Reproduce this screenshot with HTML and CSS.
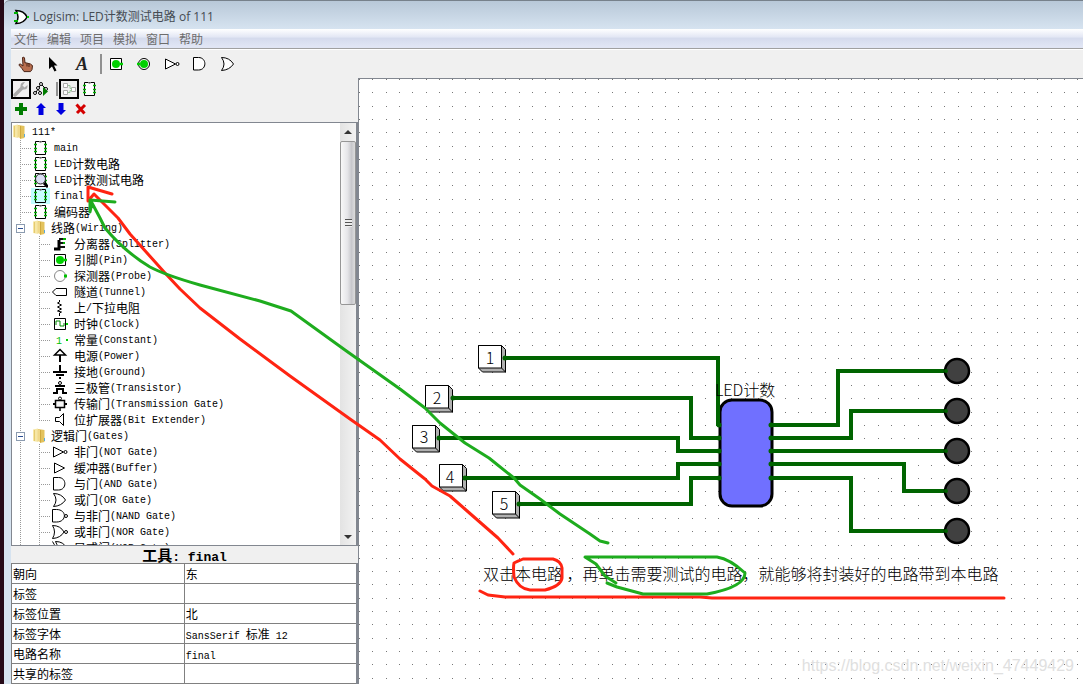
FILE: index.html
```
<!DOCTYPE html>
<html lang="zh-CN">
<head>
<meta charset="utf-8">
<title>Logisim: LED计数测试电路 of 111</title>
<link rel="stylesheet" href="styles.css">
</head>
<body>
<svg class="defs" aria-hidden="true">
  <symbol id="folder" viewBox="0 0 16 16"><path d="M6 1l6.500 1v12L8 15z" fill="#e3c25c"/><path d="M1 1.500L6 .5v13.500l-5-1z" fill="#f6e7a6"/><path d="M5.500 1.500L9 2v12.500L5.500 13z" fill="#efd88a"/><path d="M8.500 2v12.500" stroke="#cfa93f"/><path d="M2.500 2v11" stroke="#e6ca70"/><path d="M12.500 10v3" stroke="#5aa9dc"/></symbol>
  <symbol id="chip" viewBox="0 0 16 16"><path d="M3.500 1.500h10v13h-10z" fill="var(--chip, #fff)" stroke="#000"/><path d="M7 1.500q1.500 2 3 0" fill="#aaa" stroke="#888"/><path d="M2 4.500h3M2 8.500h3M2 11.500h3M12 4.500h3M12 8.500h3M12 11.500h3" stroke="#00b000" stroke-width="1.500"/></symbol>
  <symbol id="chipview" viewBox="0 0 16 16"><use href="#chip"/><circle cx="8.500" cy="7" r="5" fill="#d8dcf4" fill-opacity=".9" stroke="#222"/><path d="M12 11l4 4" stroke="#000" stroke-width="3"/></symbol>
  <symbol id="splitter" viewBox="0 0 16 16"><path d="M2 13h5V4" fill="none" stroke="#000" stroke-width="3"/><path d="M7 3h7M8 7h5M8 11h5" stroke="#111" stroke-width="2"/><path d="M11 3h3M11 7h2" stroke="#00b000" stroke-width="2"/></symbol>
  <symbol id="pin" viewBox="0 0 16 16"><path d="M2.500 2.500h11v11h-11z" fill="#fff" stroke="#000"/><circle cx="8" cy="8" r="4" fill="#00d000"/><path d="M12 8h3" stroke="#00d000" stroke-width="2.500"/></symbol>
  <symbol id="opin" viewBox="0 0 16 16"><circle cx="8" cy="8" r="5.500" fill="#fff" stroke="#000"/><circle cx="8" cy="8" r="4" fill="#00d000"/><path d="M1 8h3" stroke="#00d000" stroke-width="2.500"/></symbol>
  <symbol id="probe" viewBox="0 0 16 16"><circle cx="8" cy="8" r="5.500" fill="#fff" stroke="#888"/><path d="M12 8h3" stroke="#00c000" stroke-width="3"/></symbol>
  <symbol id="tunnel" viewBox="0 0 16 16"><path d="M.5 8L4 4.500h10.500v7H4z" fill="#fff" stroke="#000"/></symbol>
  <symbol id="resistor" viewBox="0 0 16 16"><path d="M7.500 0v2l-2 1 4 2-4 2 4 2-4 2 4 1-2 1v3" fill="none" stroke="#000"/></symbol>
  <symbol id="clock" viewBox="0 0 16 16"><path d="M2.500 2.500h11v11h-11z" fill="#fff" stroke="#000"/><path d="M4 9V5h4v5h4V7" fill="none" stroke="#008c00"/><path d="M14 8h2" stroke="#00d000" stroke-width="2"/></symbol>
  <symbol id="power" viewBox="0 0 16 16"><path d="M8 14V7" stroke="#000" stroke-width="2"/><path d="M2.500 7L8 1.500 13.500 7z" fill="#fff" stroke="#000" stroke-width="1.500"/></symbol>
  <symbol id="ground" viewBox="0 0 16 16"><path d="M8 1v6M1 8h14M4 11h8M7 14h2" stroke="#000" stroke-width="2"/></symbol>
  <symbol id="transistor" viewBox="0 0 16 16"><path d="M1 13h4V9h6v4h4M3 6h10" fill="none" stroke="#000" stroke-width="2"/><circle cx="8" cy="3" r="1.500" fill="#fff" stroke="#000"/></symbol>
  <symbol id="transmission" viewBox="0 0 16 16"><path d="M1 8h14" stroke="#000" stroke-width="2"/><path d="M3.500 4.500h9v7h-9zM8 11v4" fill="#f5f5f5" stroke="#000" stroke-width="1.500"/><circle cx="8" cy="2.500" r="1.500" fill="#fff" stroke="#000"/></symbol>
  <symbol id="extender" viewBox="0 0 16 16"><path d="M3.500 5.500h4l4-4v12l-4-4h-4z" fill="#fff" stroke="#000"/></symbol>
  <symbol id="not" viewBox="0 0 16 16"><path d="M1.500 3v10l10-5z" fill="#fff" stroke="#000"/><circle cx="13.500" cy="8" r="1.500" fill="#fff" stroke="#000"/></symbol>
  <symbol id="buffer" viewBox="0 0 16 16"><path d="M2.500 3v10l10-5z" fill="#fff" stroke="#000"/></symbol>
  <symbol id="and" viewBox="0 0 16 16"><path d="M1.500 1.500h5c8.500 0 8.500 12.500 0 12.500h-5z" fill="#fff" stroke="#000"/></symbol>
  <symbol id="or" viewBox="0 0 16 16"><path d="M1.500 1.500q8 0 12 6.500-4 6-12 6.500 5-6.500 0-13z" fill="#fff" stroke="#000"/></symbol>
  <symbol id="nand" viewBox="0 0 16 16"><path d="M.5 1.500h4c10.500 0 10.500 12.500 0 12.500h-4z" fill="#fff" stroke="#000"/><circle cx="14" cy="8" r="1.500" fill="#fff" stroke="#000"/></symbol>
  <symbol id="nor" viewBox="0 0 16 16"><path d="M.5 1.500q8 0 11.500 6.500-3.500 6-11.500 6.500 4-6.500 0-13z" fill="#fff" stroke="#000"/><circle cx="14" cy="8" r="1.500" fill="#fff" stroke="#000"/></symbol>
  <symbol id="xor" viewBox="0 0 16 16"><path d="M3.500 1.500q8 0 11 6.500-3 6-11 6.500 4-6.500 0-13zM.5 1.500q5 6.500 0 13" fill="none" stroke="#000"/></symbol>
</svg>

<div class="window">
  <header class="titlebar">
    <svg class="icon" viewBox="0 0 16 16"><path d="M3 1.500q8 0 11 6.500-3 6.500-11 6.500 4-6.500 0-13z" fill="#fff" stroke="#000" stroke-width="1.500"/><path d="M1 4h4M1 12h4" stroke="#00b000" stroke-width="2"/><path d="M14 8h2" stroke="#00d000" stroke-width="2"/></svg>
    <h1>Logisim: LED计数测试电路 of 111</h1>
  </header>
  <nav class="menubar">
    <button>文件</button><button>编辑</button><button>项目</button><button>模拟</button><button>窗口</button><button>帮助</button>
  </nav>
  <div class="toolbar">
    <button aria-label="Poke"><svg class="icon" viewBox="0 0 16 16"><path d="M4.500 1.500q1.500-1 2 .5l.5 5q1-.8 2 .3 1-.6 2 .5 1.500-.6 2 .8l1.500 1-.5 4-1.500 2H6l-2-3-3-3.500q0-1.500 1.500-1L5 10z" fill="#b86f50" stroke="#4b2417"/><path d="M9 7.500v3M11 8v3" stroke="#4b2417"/></svg></button>
    <button aria-label="Select"><svg class="icon" viewBox="0 0 16 16"><path d="M3 1v12l3-2.500 2.500 5 2-1-2.500-5h3.500z" fill="#000"/></svg></button>
    <button aria-label="Text" class="letter">A</button>
    <span class="separator"></span>
    <button aria-label="Input"><svg class="icon"><use href="#pin"/></svg></button>
    <button aria-label="Output"><svg class="icon"><use href="#opin"/></svg></button>
    <button aria-label="NOT"><svg class="icon"><use href="#not"/></svg></button>
    <button aria-label="AND"><svg class="icon"><use href="#and"/></svg></button>
    <button aria-label="OR"><svg class="icon"><use href="#or"/></svg></button>
  </div>
  <main class="workspace">
    <aside class="sidebar">
      <div class="views">
        <button class="on" aria-label="Toolbox"><svg class="icon" viewBox="0 0 16 16"><path d="M2 14l7-7" stroke="#aaa" stroke-width="3.500" stroke-linecap="round"/><path d="M14.500 4l-3 2.500-2-2L12 1Q7 1 7.500 6l2.500 2.500Q15 9 14.500 4z" fill="#aaa"/></svg></button>
        <button aria-label="Simulation tree"><svg class="icon" viewBox="0 0 16 16"><path d="M8 3L2 13M8 3l6 6M5 8l3 5" fill="none" stroke="#000"/><g fill="#fff" stroke="#000"><circle cx="8" cy="3" r="1.500"/><circle cx="5" cy="7" r="1.500"/><circle cx="2" cy="12" r="1.500"/><circle cx="7" cy="12" r="1.500"/><circle cx="13" cy="8" r="1.500"/></g><path d="M10 6l5 4.500-5 4.500z" fill="#007c00"/></svg></button>
        <span class="separator"></span>
        <button class="on" aria-label="Layout"><svg class="icon" viewBox="0 0 16 16"><path d="M2.500 2.500h4v4h-4zM2.500 9.500h4v4h-4zM10.500 6.500h4v4h-4z" fill="#fff" stroke="#aaa"/><path d="M7 4.500h2v3h2M7 11.500h2v-2h2" fill="none" stroke="#9cc79c"/></svg></button>
        <button aria-label="Appearance"><svg class="icon"><use href="#chip"/></svg></button>
      </div>
      <div class="edits">
        <button aria-label="Add"><svg class="icon" viewBox="0 0 16 16"><path d="M8 2v12M2 8h12" stroke="#007c00" stroke-width="4"/></svg></button>
        <button aria-label="Move up"><svg class="icon" viewBox="0 0 16 16"><path d="M8 2l5 5h-2.500v7h-5V7H3z" fill="#0000e0"/></svg></button>
        <button aria-label="Move down"><svg class="icon" viewBox="0 0 16 16"><path d="M8 14l5-5h-2.500V2h-5v7H3z" fill="#0000e0"/></svg></button>
        <button aria-label="Remove"><svg class="icon" viewBox="0 0 16 16"><path d="M3.500 3.500l8 9M12 4l-8 8" stroke="#d40000" stroke-width="3"/></svg></button>
      </div>
      <div class="explorer">
        <ul class="tree">
          <li class="root"><svg class="icon"><use href="#folder"/></svg><i>111*</i></li>
          <li><b></b><svg class="icon"><use href="#chip"/></svg><i>main</i></li>
          <li><b></b><svg class="icon"><use href="#chip"/></svg><i>LED</i>计数电路</li>
          <li><b></b><svg class="icon"><use href="#chipview"/></svg><i>LED</i>计数测试电路</li>
          <li class="selected"><b></b><svg class="icon"><use href="#chip"/></svg><i>final</i></li>
          <li><b></b><svg class="icon"><use href="#chip"/></svg>编码器</li>
          <li class="group"><b></b><svg class="icon"><use href="#folder"/></svg>线路<i>(Wiring)</i></li>
          <li class="leaf"><b></b><svg class="icon"><use href="#splitter"/></svg>分离器<i>(Splitter)</i></li>
          <li class="leaf"><b></b><svg class="icon"><use href="#pin"/></svg>引脚<i>(Pin)</i></li>
          <li class="leaf"><b></b><svg class="icon"><use href="#probe"/></svg>探测器<i>(Probe)</i></li>
          <li class="leaf"><b></b><svg class="icon"><use href="#tunnel"/></svg>隧道<i>(Tunnel)</i></li>
          <li class="leaf"><b></b><svg class="icon"><use href="#resistor"/></svg>上<i>/</i>下拉电阻</li>
          <li class="leaf"><b></b><svg class="icon"><use href="#clock"/></svg>时钟<i>(Clock)</i></li>
          <li class="leaf"><b></b><svg class="icon" viewBox="0 0 16 16"><text x="4" y="12" class="one">1</text><path d="M14 8h2" stroke="#00d000" stroke-width="2"/></svg>常量<i>(Constant)</i></li>
          <li class="leaf"><b></b><svg class="icon"><use href="#power"/></svg>电源<i>(Power)</i></li>
          <li class="leaf"><b></b><svg class="icon"><use href="#ground"/></svg>接地<i>(Ground)</i></li>
          <li class="leaf"><b></b><svg class="icon"><use href="#transistor"/></svg>三极管<i>(Transistor)</i></li>
          <li class="leaf"><b></b><svg class="icon"><use href="#transmission"/></svg>传输门<i>(Transmission Gate)</i></li>
          <li class="leaf last"><b></b><svg class="icon"><use href="#extender"/></svg>位扩展器<i>(Bit Extender)</i></li>
          <li class="group"><b></b><svg class="icon"><use href="#folder"/></svg>逻辑门<i>(Gates)</i></li>
          <li class="leaf"><b></b><svg class="icon"><use href="#not"/></svg>非门<i>(NOT Gate)</i></li>
          <li class="leaf"><b></b><svg class="icon"><use href="#buffer"/></svg>缓冲器<i>(Buffer)</i></li>
          <li class="leaf"><b></b><svg class="icon"><use href="#and"/></svg>与门<i>(AND Gate)</i></li>
          <li class="leaf"><b></b><svg class="icon"><use href="#or"/></svg>或门<i>(OR Gate)</i></li>
          <li class="leaf"><b></b><svg class="icon"><use href="#nand"/></svg>与非门<i>(NAND Gate)</i></li>
          <li class="leaf"><b></b><svg class="icon"><use href="#nor"/></svg>或非门<i>(NOR Gate)</i></li>
          <li class="leaf"><b></b><svg class="icon"><use href="#xor"/></svg>异或门<i>(XOR Gate)</i></li>
        </ul>
        <div class="scrollbar">
          <svg class="arrow" viewBox="0 0 8 4"><path d="M0 4l4-4 4 4z"/></svg>
          <div class="thumb"><span></span></div>
          <svg class="arrow" viewBox="0 0 8 4"><path d="M0 0l4 4 4-4z"/></svg>
        </div>
      </div>
      <h2>工具<i>: final</i></h2>
      <table class="attributes">
        <tr><th>朝向</th><td>东</td></tr>
        <tr><th>标签</th><td></td></tr>
        <tr><th>标签位置</th><td>北</td></tr>
        <tr><th>标签字体</th><td><i>SansSerif </i>标准<i> 12</i></td></tr>
        <tr><th>电路名称</th><td><i>final</i></td></tr>
        <tr><th>共享的标签</th><td></td></tr>
      </table>
    </aside>
    <section class="canvas">
      <svg class="circuit">
        <defs>
          <pattern id="grid" width="133" height="133" patternUnits="userSpaceOnUse">
            <g class="dots">
              <path d="M0 .5h133M0 13.500h133M0 27.500h133M0 40.500h133M0 53.500h133M0 67.500h133M0 80.500h133M0 93.500h133M0 106.500h133M0 120.500h133"/>
            </g>
          </pattern>
          <g id="key"><path d="M0 0h23l4 4v22.500H4L0 22.500z" fill="#b0b0b0" stroke="#000"/><path d="M0 0h23v22.500H0z" fill="#fff" stroke="#000"/><path d="M23 22.500l4 4" stroke="#000"/></g>
          <g id="led"><circle r="12" fill="#404040" stroke="#000" stroke-width="2.500"/><circle cx="-11" r="2" fill="#006400"/></g>
        </defs>
        <rect width="100%" height="100%" fill="url(#grid)"/>
        <g transform="translate(-359 -79)">
          <use href="#key" x="478.500" y="345.500"/><use href="#key" x="425.500" y="385.500"/><use href="#key" x="412.500" y="425.500"/><use href="#key" x="439.500" y="464.500"/><use href="#key" x="492.500" y="491.500"/>
          <g class="label" text-anchor="middle"><text x="490" y="364">1</text><text x="437" y="404">2</text><text x="424" y="443">3</text><text x="450" y="483">4</text><text x="504" y="510">5</text></g>
          <rect x="720" y="400" width="52" height="106" rx="12" fill="#7070ff" stroke="#000" stroke-width="3"/>
          <path class="wire" d="M505 358H718V426M453 398H691V438H720M439 438H678V451H720M465 478H678V464H720M519 504H691V478H720M771 425H838V371H946M771 438H851V411H946M771 451H946M771 464H904V491H946M771 478H851V531H946"/>
          <path class="joint" d="M505 358h0M453 398h0M439 438h0M465 478h0M519 504h0M719 425h0M719 438h0M719 451h0M719 464h0M719 478h0M771 425h0M771 438h0M771 451h0M771 464h0M771 478h0"/>
          <use href="#led" x="957" y="371"/><use href="#led" x="957" y="411"/><use href="#led" x="957" y="451"/><use href="#led" x="957" y="491"/><use href="#led" x="957" y="531"/>
          <g class="label"><text x="715" y="396">LED计数</text><text x="483" y="580">双击本电路 ，再单击需要测试的电路，就能够将封装好的电路带到本电路</text></g>
        </g>
      </svg>
      <p class="watermark">https://blog.csdn.net/weixin_47449429</p>
    </section>
  </main>
  <svg class="annotations" aria-hidden="true">
    <g class="red">
      <path d="M112 194L88 187v14L94 194L100 200L118 218L130 234L165 273L180 289L200 308L240 339L290 376L350 419L380 440L400 459L425 479L432 486L450 496L466 510L482 524L498 538L513 554"/>
      <path d="M514 563L523 559L553 559Q561 561 562 568V578Q561 586 545 590H530Q519 589 514 577Q513 567 514 563L518 561"/>
      <path d="M480 591L488 595L505 597H700L712 598H1004"/>
    </g>
    <g class="green">
      <path d="M115 202L90 200v12L92 203L100 218L105 228Q125 252 150 267Q165 275 200 285L260 301L291 311L345 350L400 389L425 408L440 423L465 443L489 458L514 478L520 485L540 499L560 514L590 534L600 541L608 543"/>
      <path d="M616 583L605 576L596 564L585 557H717Q730 559 745 573Q745 587 707 594H643L617 587L607 583"/>
    </g>
  </svg>
</div>
</body>
</html>
```
FILE: styles.css
```
* { box-sizing: border-box; }

body {
  margin: 0;
  font: 12px/16px "Noto Sans CJK SC", sans-serif;
  color: #000;
  background: #f0f0f0;
}

button {
  padding: 0;
  border: 0;
  background: none;
  font: inherit;
  color: inherit;
}

i {
  font: 10px/10px "Liberation Mono", monospace;
  white-space: pre;
}

.defs { position: absolute; width: 0; height: 0; }

.icon { width: 16px; height: 16px; flex: none; display: block; overflow: visible; }

.one { font: 10px "Liberation Mono", monospace; fill: #00c000; }

.window {
  position: relative;
  height: 100vh;
  display: flex;
  flex-direction: column;
  overflow: hidden;
  padding-left: 11px;
  background: linear-gradient(90deg, #260a18 4px, #d6e3f0 4px 11px, #f0f0f0 11px);
}

.titlebar {
  display: flex;
  align-items: center;
  gap: 4px;
  height: 29px;
  margin-left: -7px;
  padding: 4px 9px 0;
  border-top: 1px solid #77818b;
  border-radius: 6px 0 0;
  background: linear-gradient(#b8c8d8, #d6e3f0);
}

.titlebar h1 {
  margin: 0;
  font: 12px/20px "Open Sans", "Noto Sans CJK SC", sans-serif;
  color: #454b52;
}

.menubar {
  display: flex;
  gap: 9px;
  height: 20px;
  padding: 1px 3px 0;
  color: #6d6d6d;
  background: linear-gradient(#fff, #e4e8f5 40%, #d5dbed 50%, #e0e5f4 90%);
  border-bottom: 1px solid #a0a0a0;
}

.toolbar {
  display: flex;
  align-items: center;
  height: 29px;
  padding-left: 1px;
  border-top: 1px solid #fff;
}

.toolbar button { width: 28px; display: grid; place-items: center; }

.toolbar .letter { font: italic bold 18px/20px "Liberation Serif", serif; color: #222; }

.separator { width: 2px; height: 20px; background: #909090; }

.toolbar .separator { margin: 0 0 0 4px; }

.workspace { flex: 1; min-height: 0; display: flex; }

.sidebar { width: 347px; flex: none; display: flex; flex-direction: column; }

.views { display: flex; align-items: center; height: 22px; }

.views button { padding: 2px; border: 0 solid #000; }

.views .on { padding: 0; border-width: 2px; }

.views .separator { height: 14px; margin: 0 1px 0 5px; }

.edits { display: flex; height: 22px; padding: 1px 0 0 2px; gap: 4px; }

.edits button { height: 16px; }

.explorer {
  flex: 1;
  min-height: 0;
  display: flex;
  overflow: hidden;
  border: solid #828790;
  border-width: 1px 2px 1px 1px;
  background: #fff;
}

.tree { flex: 1; margin: 0; padding: 1px 0 0; list-style: none; }

.tree i { line-height: 18px; }

.tree li {
  display: flex;
  height: 16px;
  padding-left: 8px;
  white-space: nowrap;
  background: repeating-linear-gradient(#999 0 1px, transparent 1px 2px) 8px 0 / 1px 16px no-repeat;
}

.tree .icon { margin-right: 6px; }

.tree b {
  width: 12px;
  background: repeating-linear-gradient(90deg, #999 0 1px, transparent 1px 2px) 0 8px / 100% 1px no-repeat;
}

.tree .root { padding-left: 0; background: none; }

.tree .root .icon { margin-right: 4px; }

.tree .selected .icon { --chip: #c8ffff; background: #c0ffff; box-shadow: 2px 0 #c0ffff, -1px 0 #c0ffff; }

.tree .group { padding-left: 4px; }

.tree .group .icon { margin-right: 3px; }

.tree .group b {
  width: 9px;
  height: 9px;
  margin: 4px 7px 0 0;
  border: 1px solid #8b9bb0;
  background: linear-gradient(#2b4d92, #2b4d92) center / 5px 1px no-repeat #fff;
}

.tree .leaf {
  padding-left: 27px;
  background:
    repeating-linear-gradient(#999 0 1px, transparent 1px 2px) 8px 0 / 1px 16px no-repeat,
    repeating-linear-gradient(#999 0 1px, transparent 1px 2px) 27px 0 / 1px 16px no-repeat;
}

.tree .last { background-size: 1px 16px, 1px 8px; }

.tree .leaf b { width: 13px; background-size: 11px 1px; }

.scrollbar {
  width: 16px;
  display: flex;
  flex-direction: column;
  align-items: center;
  padding: 7px 0 6px;
  background: linear-gradient(90deg, #e3e3e3, #f2f2f2);
}

.arrow { width: 8px; height: 4px; fill: #333; }

.thumb {
  width: 16px;
  height: 40%;
  min-height: 40px;
  margin: 7px 0 auto;
  display: grid;
  place-items: center;
  border: 1px solid #969696;
  border-radius: 2px;
  background: linear-gradient(90deg, #f8f8f8, #e6e6e9 45%, #c8c8cc 75%, #dcdcdc);
}

.thumb span { width: 7px; height: 8px; background: repeating-linear-gradient(#555 0 1px, #eee 1px 3px); }

.sidebar h2 { margin: 0; height: 17px; font: bold 15px/17px "Noto Sans CJK SC", sans-serif; text-align: center; }

.sidebar h2 i { font: bold 13px/13px "Liberation Mono", monospace; }

.attributes {
  width: 100%;
  border-collapse: collapse;
  table-layout: fixed;
  background: #fff;
  border-right: 2px solid #828790;
}

.attributes th,
.attributes td {
  height: 20px;
  padding: 1px 1px 0;
  border: 1px solid #808080;
  font-weight: normal;
  line-height: 16px;
  text-align: left;
}

.canvas {
  position: relative;
  flex: 1;
  min-width: 0;
  overflow: hidden;
  border: solid #828790;
  border-width: 1px 0 0 1px;
  background: #fff;
}

.circuit { display: block; width: 100%; height: 100%; }

.dots { fill: none; stroke: #777; stroke-dasharray: 1 12 1 13 1 12 1 12 1 13 1 12 1 12 1 12 1 13 1 12; }

.wire { fill: none; stroke: #006400; stroke-width: 4; }

.joint { stroke: #006400; stroke-width: 5; stroke-linecap: round; }

.label { font: 300 16px "Noto Sans CJK SC", sans-serif; fill: #000; }

.watermark {
  position: absolute;
  right: 9px;
  bottom: 8px;
  margin: 0;
  font: 16px/20px "Liberation Sans", sans-serif;
  color: #e0e0e0;
}

.annotations { position: absolute; left: 0; top: 0; width: 100%; height: 100%; pointer-events: none; }

.annotations path { fill: none; stroke-width: 3; stroke-linecap: round; stroke-linejoin: round; }

.red path { stroke: #ff2412; }

.green path { stroke: #1eac1e; }
```
